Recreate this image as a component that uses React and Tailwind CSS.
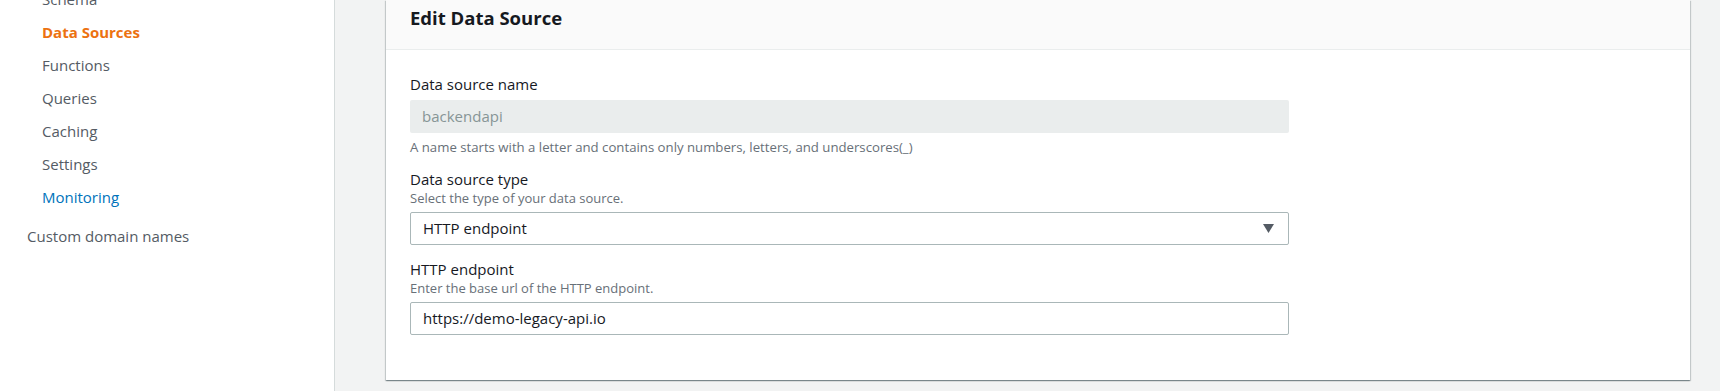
const navItems = [
  { label: 'Schema', tone: 'text-[#545b64]' },
  { label: 'Data Sources', tone: 'text-[#ec7211] font-bold' },
  { label: 'Functions', tone: 'text-[#545b64]' },
  { label: 'Queries', tone: 'text-[#545b64]' },
  { label: 'Caching', tone: 'text-[#545b64]' },
  { label: 'Settings', tone: 'text-[#545b64]' },
  { label: 'Monitoring', tone: 'text-[#0073bb]' },
];

const Field = ({ label, hint, children, className = '' }) => (
  <div className={className}>
    <div className="text-[15px] leading-[20px] text-[#16191f]">{label}</div>
    {hint && <div className="text-[13px] leading-[18px] text-[#687078]">{hint}</div>}
    {children}
  </div>
);

export default function App() {
  return (
    <div
      className="flex h-[391px] w-full overflow-hidden bg-[#f2f3f3]"
      style={{ fontFamily: '"Open Sans", "Noto Sans", Arial, sans-serif' }}
    >
      <aside className="w-[335px] shrink-0 border-r border-[#d5dbdb] bg-white">
        <ul className="-mt-[12px] pl-[42px]">
          {navItems.map((item) => (
            <li key={item.label} className={`h-[33px] text-[15px] leading-[22px] ${item.tone}`}>
              {item.label}
            </li>
          ))}
        </ul>
        <div className="mt-[6px] pl-[27px] text-[15px] leading-[22px] text-[#545b64]">
          Custom domain names
        </div>
      </aside>

      <main className="flex-1 pl-[51px] pr-[30px]">
        <section className="bg-white shadow-[0_1px_1px_0_rgba(0,28,36,0.3),1px_1px_1px_0_rgba(0,28,36,0.15),-1px_1px_1px_0_rgba(0,28,36,0.15)]">
          <header className="h-[50px] border-b border-[#eaeded] bg-[#fafafa] px-6 pt-[6px]">
            <h2 className="text-[18.5px] font-bold leading-[24px] text-[#16191f]">Edit Data Source</h2>
          </header>

          <div className="w-[927px] px-6 pb-[45px] pt-[24px]">
            <Field label="Data source name">
              <div className="mt-[6px] flex h-[33px] items-center rounded-[2px] bg-[#eaeded] px-3 text-[15px] text-[#879596]">
                backendapi
              </div>
              <div className="mt-[5px] text-[13.2px] leading-[18px] text-[#687078]">
                A name starts with a letter and contains only numbers, letters, and underscores(_)
              </div>
            </Field>

            <Field label="Data source type" hint="Select the type of your data source." className="mt-[13px]">
              <div className="mt-[5px] flex h-[33px] items-center justify-between rounded-[2px] border border-[#aab7b8] px-3 text-[15px] text-[#16191f]">
                <span>HTTP endpoint</span>
                <svg width="11" height="9" viewBox="0 0 11 9" className="mr-[2px]">
                  <path d="M0 0 H11 L5.5 9 Z" fill="#545b64" />
                </svg>
              </div>
            </Field>

            <Field label="HTTP endpoint" hint="Enter the base url of the HTTP endpoint." className="mt-[14px]">
              <div className="mt-[5px] flex h-[33px] items-center rounded-[2px] border border-[#aab7b8] px-3 text-[15px] text-[#16191f]">
                https://demo-legacy-api.io
              </div>
            </Field>
          </div>
        </section>
      </main>
    </div>
  );
}
